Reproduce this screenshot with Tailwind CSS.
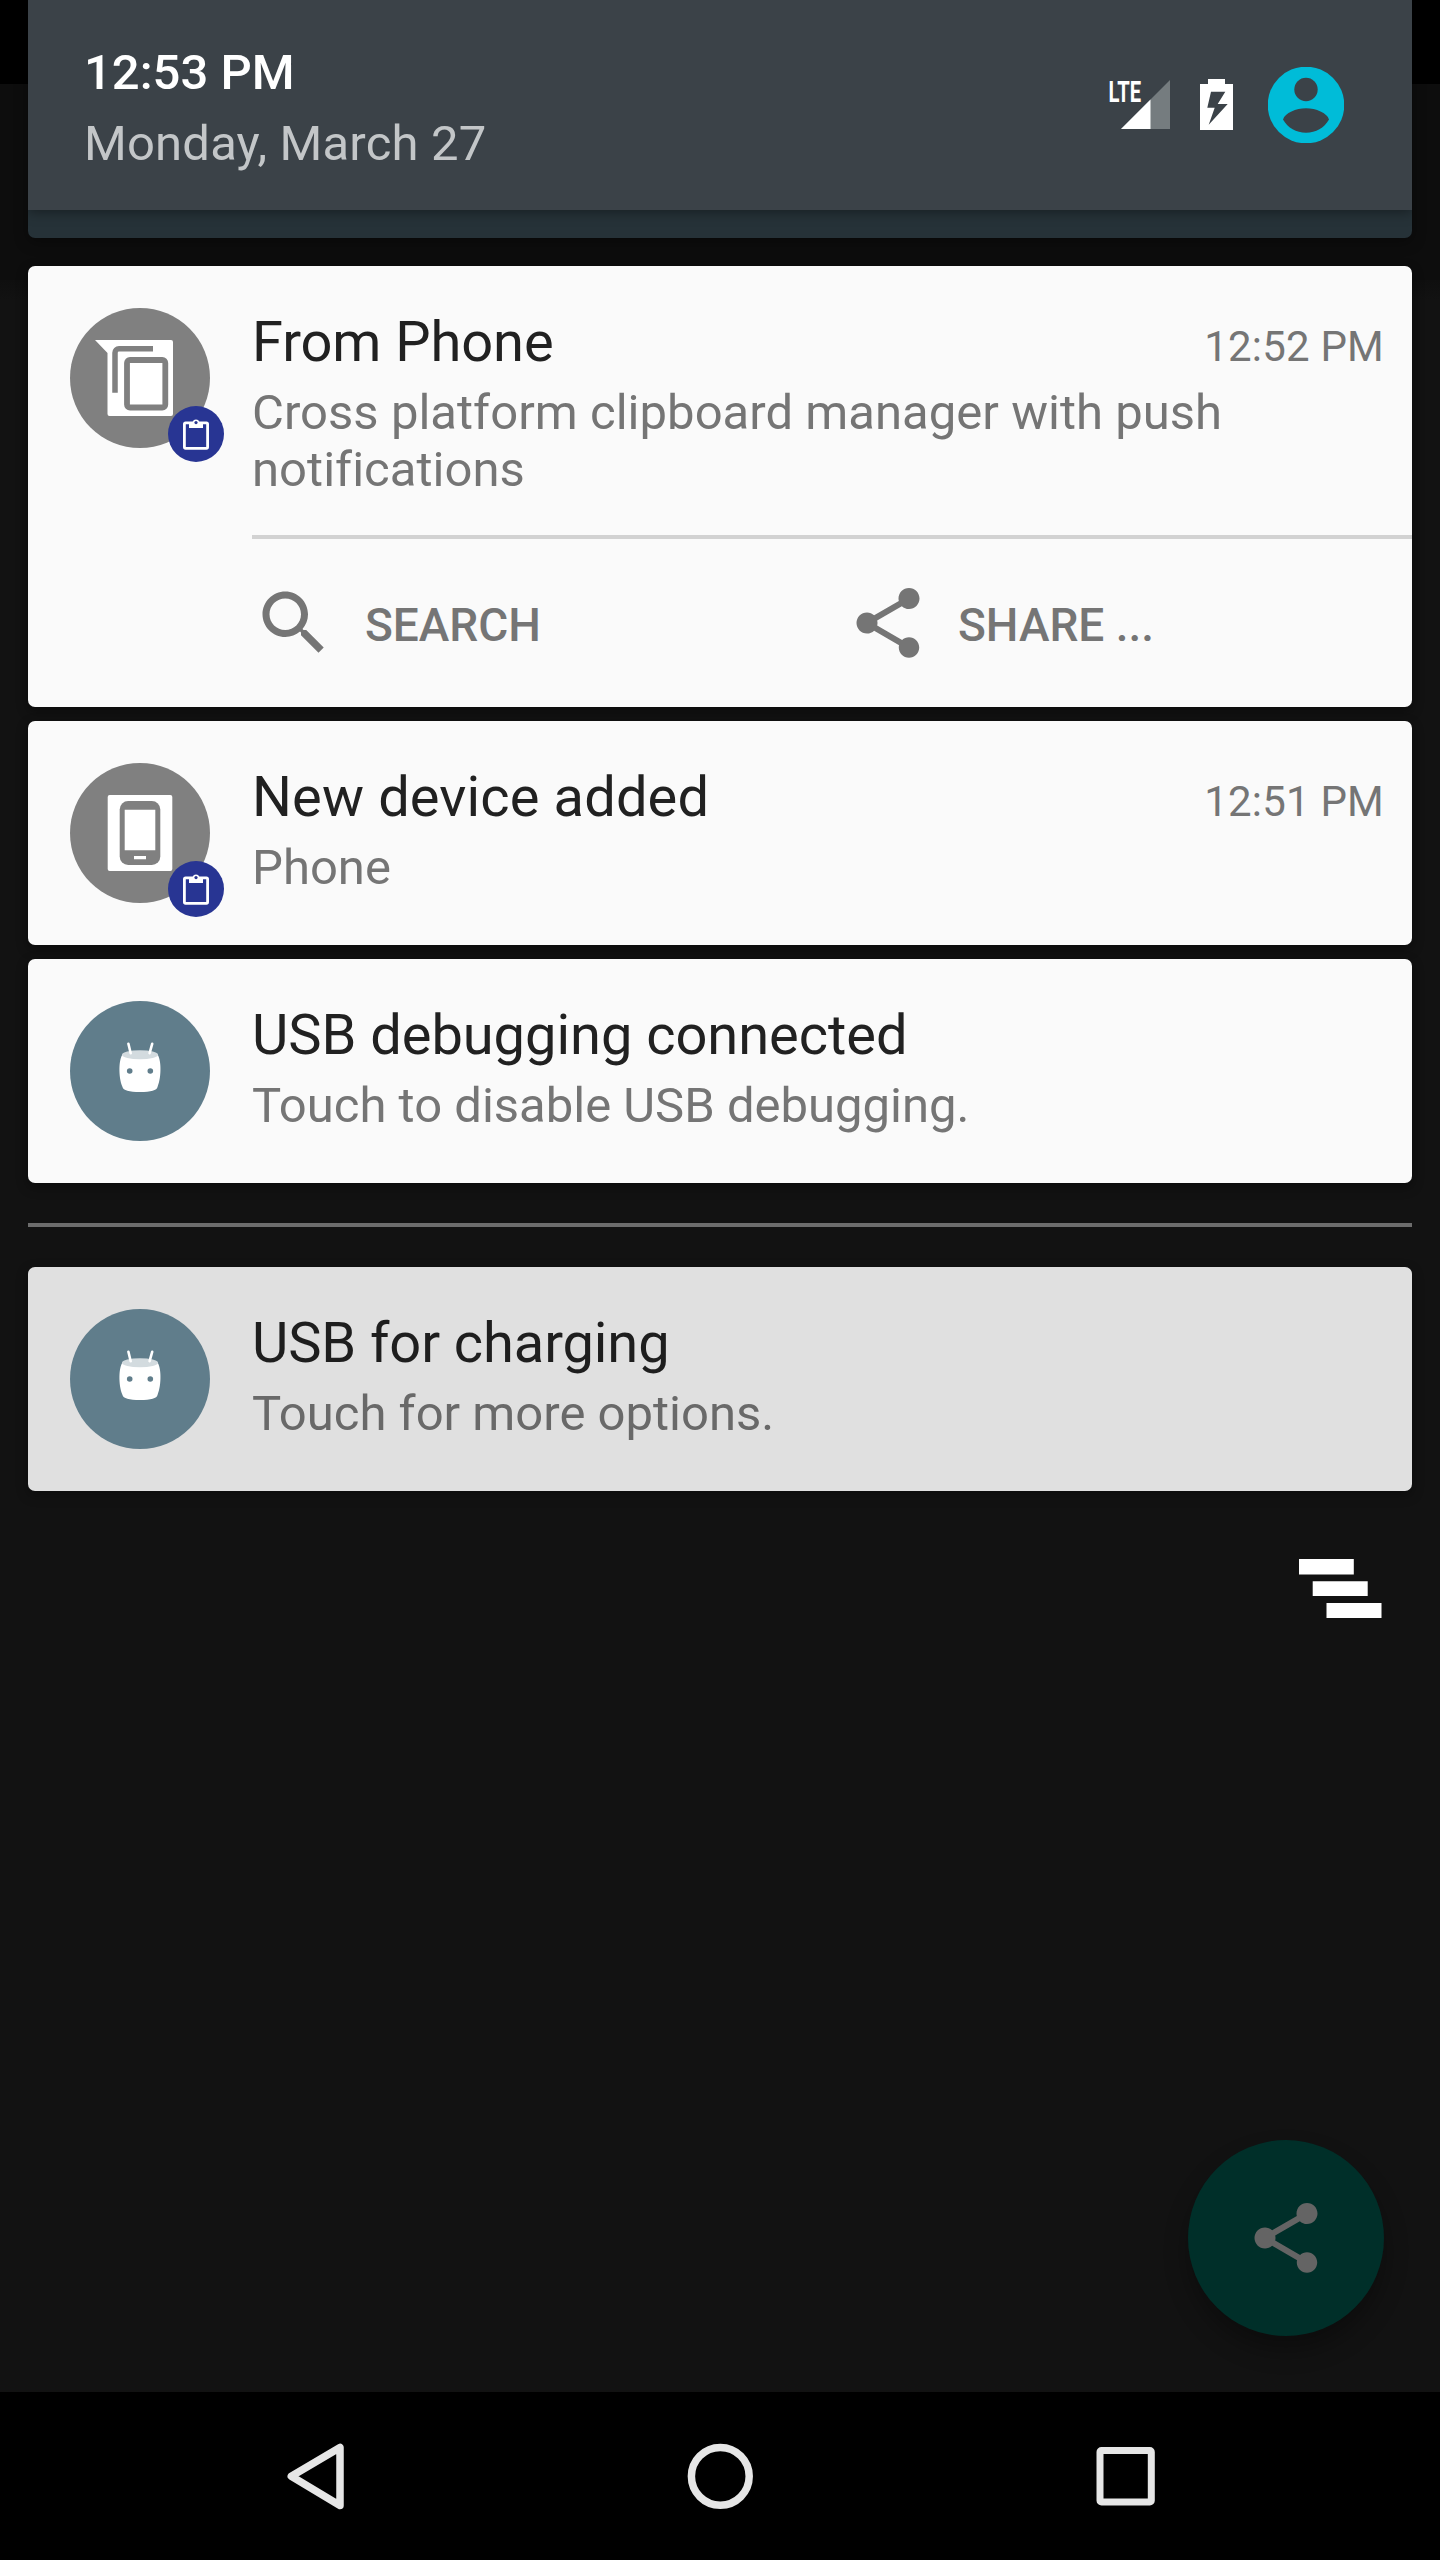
<!DOCTYPE html>
<html lang="en">
<head>
<meta charset="utf-8">
<title>Notifications</title>
<script src="https://cdn.jsdelivr.net/npm/@tailwindcss/browser@4"></script>
</head>
<body class="bg-black">
<svg class="hidden">
  <symbol id="share" viewBox="0 0 24 24"><path d="M18 16.08c-.76 0-1.44.3-1.96.77L8.91 12.7c.05-.23.09-.46.09-.7s-.04-.47-.09-.7l7.05-4.11c.54.5 1.25.81 2.04.81 1.66 0 3-1.34 3-3s-1.34-3-3-3-3 1.34-3 3c0 .24.04.47.09.7L8.04 9.81C7.5 9.31 6.79 9 6 9c-1.66 0-3 1.34-3 3s1.34 3 3 3c.79 0 1.5-.31 2.04-.81l7.12 4.16c-.05.21-.08.43-.08.65 0 1.61 1.31 2.92 2.92 2.92s2.92-1.31 2.92-2.92-1.31-2.92-2.92-2.92z"/></symbol>
  <symbol id="badge" viewBox="0 0 56 56">
    <circle cx="28" cy="28" r="28" fill="#283593"/>
    <rect x="16.4" y="16.9" width="23.2" height="25.4" rx="1.2" fill="none" stroke="#fff" stroke-width="2.8"/>
    <path d="M21 16h3.6a3.6 3.6 0 0 1 6.8 0H35v6H21z" fill="#fff"/>
    <circle cx="28" cy="16.6" r="1.6" fill="#283593"/>
  </symbol>
  <symbol id="robot" viewBox="0 0 140 140">
    <circle cx="70" cy="70" r="70" fill="#607d8b"/>
    <path d="M52.5 53.5Q70 60 87.5 53.5C91 58 92 75 87.500 86Q86.500 91 70 91Q53.500 91 52.500 86C48 75 49 58 52.500 53.500z" fill="#fff"/>
    <ellipse cx="70" cy="53.700" rx="18" ry="4.500" fill="#d3dbdf"/>
    <path d="M58.400 42.800l2.300 9.400M82.200 42.800l-2.600 9.400" stroke="#fff" stroke-width="2.600" stroke-linecap="round"/>
    <circle cx="59.700" cy="70" r="2.800" fill="#607d8b"/><circle cx="80.300" cy="70" r="2.800" fill="#607d8b"/>
  </symbol>
</svg>
<div class="relative flex h-[2560px] w-[1440px] flex-col overflow-hidden bg-[#121212] font-['Roboto',sans-serif]">
  <!-- dimmed app behind the shade -->
  <div class="absolute inset-x-0 top-0">
    <div class="h-[84px] bg-black"></div>
    <div class="h-[196px] bg-[#0d0d0d]"></div>
    <div class="h-[20px] bg-linear-to-b from-[#0f0f0f] to-[#121212]"></div>
  </div>

  <div class="relative flex flex-1 flex-col px-[28px]">
    <header class="h-[238px] overflow-hidden rounded-b-[7px] bg-[#263238] shadow-[0_4px_14px_rgba(0,0,0,0.35)]">
      <div class="flex h-[210px] items-start bg-[#3b4248] pl-[56px] shadow-[0_2px_12px_rgba(0,0,0,0.4)]">
        <div class="pt-[44px]">
          <div class="text-[49px] leading-[58px] font-medium text-white">12:53 PM</div>
          <div class="mt-[13px] text-[49px] leading-[58px] tracking-[0.18px] text-[#c3c6c8]">Monday, March 27</div>
        </div>
        <div class="ml-auto flex pt-[67px] pr-[68px]">
          <svg class="mt-[12px] mr-[30px] overflow-visible" width="62" height="51" viewBox="0 0 62 51">
            <path d="M13 50L62 1v49z" fill="#757c7f"/>
            <path d="M13 50l29.500-29.500V50z" fill="#fff"/>
            <text x="0.500" y="23" font-family="Roboto" font-weight="700" font-size="30" textLength="32.500" lengthAdjust="spacingAndGlyphs" fill="#fff">LTE</text>
          </svg>
          <svg class="mt-[12px] mr-[35px]" width="33" height="51" viewBox="0 0 33 51">
            <path fill-rule="evenodd" fill="#fff" d="M8 0h17v5h8v46H0V5h8zM11 12.700L7.300 28.700h7.400L8.700 45.700l19-20.700h-10L25.300 12.700z"/>
          </svg>
          <svg width="76" height="76" viewBox="0 0 76 76">
            <circle cx="38" cy="38" r="38.300" fill="#00bcd8"/>
            <circle cx="38" cy="22.500" r="11.700" fill="#3b4248"/>
            <path d="M15 52.500C17 46 28 41.300 38 41.300S59 46 61 52.500C56 61 48 65.700 38 65.700S20 61 15 52.500z" fill="#3b4248"/>
          </svg>
        </div>
      </div>
    </header>

    <main class="mt-[28px] flex flex-col">
      <article class="h-[441px] rounded-[7px] bg-[#fafafa] shadow-[0_4px_12px_rgba(0,0,0,0.4)]">
        <div class="flex h-[269px]">
          <div class="relative mt-[42px] ml-[42px] size-[140px]">
            <svg class="size-[140px]" viewBox="0 0 140 140">
              <circle cx="70" cy="70" r="70" fill="#808080"/>
              <path d="M25 32h76a2 2 0 0 1 2 2v72a2 2 0 0 1-2 2H39.500a2 2 0 0 1-2-2V45z" fill="#fff"/>
              <path d="M83 40.800H49a4 4 0 0 0-4 4v40" fill="none" stroke="#808080" stroke-width="5.500"/>
              <rect x="57" y="52" width="38.300" height="47.500" rx="3" fill="none" stroke="#808080" stroke-width="5.800"/>
            </svg>
            <svg class="absolute top-[98px] left-[98px] size-[56px]"><use href="#badge"/></svg>
          </div>
          <div class="ml-[42px] flex-1 pt-[43px] pr-[28px]">
            <div class="flex items-baseline justify-between">
              <h2 class="text-[56px] leading-[66px] tracking-[-0.08px] text-[#212121]">From Phone</h2>
              <span class="text-[42px] leading-[50px] tracking-[0.2px] text-[#757575]">12:52 PM</span>
            </div>
            <p class="mt-[9px] text-[49px] leading-[57px] tracking-[0.03px] text-[#757575]">Cross platform clipboard manager with push<br>notifications</p>
          </div>
        </div>
        <div class="ml-[224px] flex h-[172px] items-center border-t-4 border-[#d2d2d2] text-[46px] font-medium text-[#757575]">
          <div class="flex w-[593px] items-center gap-[29px]">
            <svg class="size-[84px]" viewBox="0 0 24 24" fill="#757575"><path d="M15.500 14h-.79l-.28-.27C15.410 12.590 16 11.110 16 9.500 16 5.910 13.090 3 9.500 3S3 5.910 3 9.500 5.910 16 9.500 16c1.610 0 3.090-.59 4.230-1.570l.27.28v.79l5 4.990L20.490 19l-4.990-5zm-6 0C7.010 14 5 11.990 5 9.500S7.010 5 9.500 5 14 7.010 14 9.500 11.990 14 9.500 14z"/></svg>
            <span class="pt-[5px]">SEARCH</span>
          </div>
          <div class="flex items-center gap-[28px]">
            <svg class="ml-[1px] size-[84px]" fill="#757575"><use href="#share"/></svg>
            <span class="pt-[5px]">SHARE ...</span>
          </div>
        </div>
      </article>

      <article class="mt-[14px] flex h-[224px] rounded-[7px] bg-[#fafafa] shadow-[0_4px_12px_rgba(0,0,0,0.4)]">
        <div class="relative mt-[42px] ml-[42px] size-[140px]">
          <svg class="size-[140px]" viewBox="0 0 140 140">
            <circle cx="70" cy="70" r="70" fill="#808080"/>
            <rect x="37.700" y="32" width="64.600" height="76" rx="2" fill="#fff"/>
            <rect x="49.700" y="38" width="40.600" height="64" rx="8.500" fill="#808080"/>
            <path d="M54.700 46.700h30.600v40.600H54.700zM64 93h12v3.300H64z" fill="#fff"/>
          </svg>
          <svg class="absolute top-[98px] left-[98px] size-[56px]"><use href="#badge"/></svg>
        </div>
        <div class="ml-[42px] flex-1 pt-[43px] pr-[28px]">
          <div class="flex items-baseline justify-between">
            <h2 class="text-[56px] leading-[66px] tracking-[0.13px] text-[#212121]">New device added</h2>
            <span class="text-[42px] leading-[50px] tracking-[0.2px] text-[#757575]">12:51 PM</span>
          </div>
          <p class="mt-[9px] text-[49px] leading-[57px] text-[#757575]">Phone</p>
        </div>
      </article>

      <article class="mt-[14px] flex h-[224px] rounded-[7px] bg-[#fafafa] shadow-[0_4px_12px_rgba(0,0,0,0.4)]">
        <svg class="mt-[42px] ml-[42px] size-[140px]"><use href="#robot"/></svg>
        <div class="ml-[42px] pt-[43px]">
          <h2 class="text-[56px] leading-[66px] tracking-[-0.04px] text-[#212121]">USB debugging connected</h2>
          <p class="mt-[9px] text-[49px] leading-[57px] text-[#757575]">Touch to disable USB debugging.</p>
        </div>
      </article>

      <hr class="my-[40px] h-[4px] border-0 bg-[#6c6c6c]">

      <article class="flex h-[224px] rounded-[7px] bg-[#e0e0e0] shadow-[0_4px_12px_rgba(0,0,0,0.35)]">
        <svg class="mt-[42px] ml-[42px] size-[140px]"><use href="#robot"/></svg>
        <div class="ml-[42px] pt-[43px]">
          <h2 class="text-[56px] leading-[66px] tracking-[-0.1px] text-[#1e1e1e]">USB for charging</h2>
          <p class="mt-[9px] text-[49px] leading-[57px] text-[#696969]">Touch for more options.</p>
        </div>
      </article>

      <svg class="mt-[68px] mr-[30px] self-end" width="83" height="59" viewBox="0 0 83 59" fill="#fff">
        <path d="M0 0h54.800v15.500H0zM13.700 22.200h55v14.800h-55zM27.500 43.900h55V59h-55z"/>
      </svg>
    </main>

    <button class="mt-auto mr-[28px] mb-[56px] flex size-[196px] items-center justify-center self-end rounded-full bg-[#002f29] shadow-[0_14px_24px_rgba(0,0,0,0.3)]">
      <svg class="size-[84px]" fill="#646464"><use href="#share"/></svg>
    </button>
  </div>

  <nav class="relative flex h-[168px] items-center justify-center bg-black">
    <svg width="870" height="70" viewBox="0 0 870 70" fill="none" stroke="#e6e6e6" stroke-width="7.500" stroke-linejoin="round">
      <path d="M6.300 35.300L55 6.500V64.500z"/>
      <circle cx="435.300" cy="35.300" r="28.900"/>
      <rect x="815" y="9.500" width="51.300" height="51.500" rx="1.500" stroke-width="7"/>
    </svg>
  </nav>
</div>
</body>
</html>
